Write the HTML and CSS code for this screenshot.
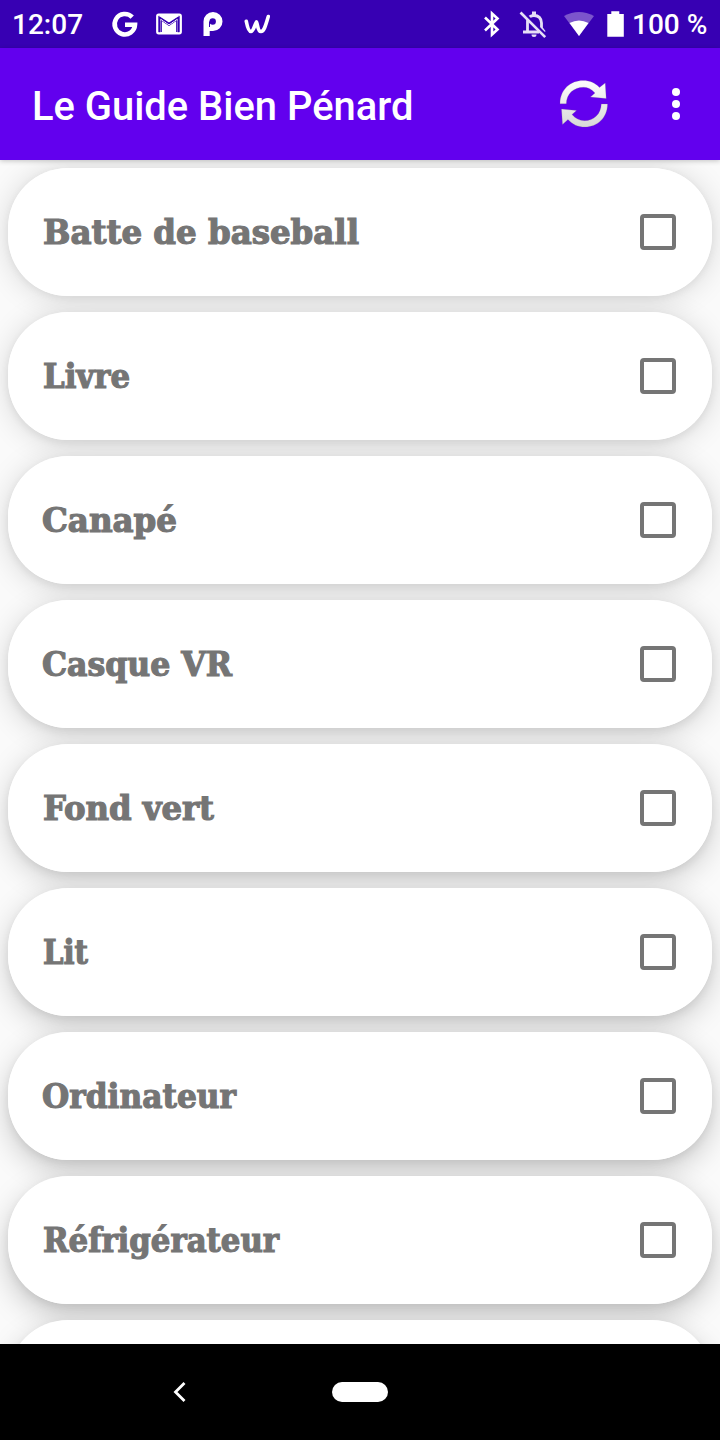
FILE: index.html
```html
<!DOCTYPE html>
<html lang="fr">
<head>
<meta charset="utf-8">
<title>Le Guide Bien Pénard</title>
<link rel="stylesheet" href="styles.css">
</head>
<body>
<div class="screen">
  <div class="status">
    <span class="clock">12:07</span>
    <svg class="notifications" width="170" height="48" viewBox="0 0 170 48" fill="none" stroke="#fff">
      <path d="M32.200 17.200A10.200 10.200 0 1 0 35 24.700H25" stroke-width="4.600"/>
      <rect x="57.200" y="14.700" width="23.600" height="18.600" rx="1.500" stroke-width="2.200"/>
      <path d="M61 33.500V20.500l8 5.500 8-5.500v13z" fill="#fff" stroke="none"/>
      <path d="M60.800 33V19.300l8.200 5.500 8.200-5.500V33" stroke="#fff" stroke-width="1"/>
      <path d="M59.500 16.800l9.500 6.400 9.500-6.400V14h-19z" fill="#fff" stroke="none"/>
      <path d="M59.700 17.200l9.300 6.200 9.300-6.200M61.200 20.500V32M76.800 20.500V32" stroke="#3700b3" stroke-width="1.300"/>
      <path d="M103.500 36V21.500a9.500 9.500 0 1 1 9.500 9.500h-3.300v5z" fill="#fff" stroke="none"/>
      <circle cx="112.700" cy="21.500" r="3.200" fill="#3700b3" stroke="none"/>
      <path d="M109.500 21.500v5.500" stroke="#3700b3" stroke-width="1"/>
      <path d="M146.300 21.300q2 10.200 4.700 10.200c2.500 0 3.500-6.500 5.500-9.500 1.500 3 1 9.500 4.500 9.500 3.300 0 5-7.500 7.300-15" stroke-width="3.600" stroke-linecap="round" stroke-linejoin="round"/>
    </svg>
    <svg class="indicators" width="150" height="48" viewBox="0 0 150 48" fill="none" stroke="#fff">
      <path d="M5 17.500l12.500 12-5.500 5V13.500l5.500 5L5 30.500" stroke-width="2.600"/>
      <path d="M43 32h16M47.500 32V21q1-5.500 6.500-5.500 7 0 7.500 7.500v5l3 4" stroke-width="2.800" stroke="#e6dff6"/>
      <path d="M51.500 34.500h5a2.500 2.500 0 0 1-5 0zM52 15v-3.500h4V15z" fill="#e6dff6" stroke="none"/>
      <path d="M42.500 11.500l25 25" stroke="#3700b3" stroke-width="2.500"/>
      <path d="M40.500 12.500l24.700 24.700" stroke="#e6dff6" stroke-width="2.600"/>
      <path d="M84 16q15-8 30 0L99 36z" fill="#7c55cc" stroke="none"/>
      <path d="M89.500 23q9.500-5 19 0L99 36z" fill="#fff" stroke="none"/>
      <path d="M127.300 14h4v-2.700h8V14h4.500v22.700h-16.500z" fill="#fff" stroke="none"/>
    </svg>
    <span class="battery">100 %</span>
  </div>

  <header class="appbar">
    <h1 class="title">Le Guide Bien Pénard</h1>
    <svg class="refresh" width="52" height="52" viewBox="0 0 52 52">
      <defs>
        <linearGradient id="silver" x1="0" y1="0" x2="0" y2="52" gradientUnits="userSpaceOnUse">
          <stop offset="0" stop-color="#fff"/><stop offset="1" stop-color="#d6d6d6"/>
        </linearGradient>
      </defs>
      <g fill="url(#silver)" stroke="#777" stroke-opacity=".35" stroke-width=".6">
        <path d="M2 25.800C2 11 13 2.500 25 2.500c7 0 12 2.300 16.500 7l5.700-4.500 1 15.500-15.700-1.500 4.500-4C33 11 29.500 9.300 25.500 9.300 15.500 9.300 8.500 16 8.300 25.800z"/>
        <path d="M49.500 26C49.500 40 39 49 27 49c-7 0-12.500-2.500-17-7.500L4.500 46.500 3.500 31l15 1.500-4.500 4c3.500 4 7.500 6.200 12.500 6.200C36 42.700 43 36 43.300 26z"/>
      </g>
    </svg>
    <svg class="more" width="10" height="36" viewBox="0 0 10 36" fill="#fff">
      <circle cx="5" cy="6" r="4"/><circle cx="5" cy="18" r="4"/><circle cx="5" cy="30" r="4"/>
    </svg>
  </header>

  <main class="list">
    <div class="item lift-1"><div class="card"><svg class="label" viewBox="0 0 400 60"><text x="0" y="42" textLength="316" lengthAdjust="spacingAndGlyphs">Batte de baseball</text></svg><span class="check"></span></div></div>
    <div class="item lift-2"><div class="card"><svg class="label" viewBox="0 0 400 60"><text x="0" y="42" textLength="87" lengthAdjust="spacingAndGlyphs">Livre</text></svg><span class="check"></span></div></div>
    <div class="item lift-3"><div class="card"><svg class="label" viewBox="0 0 400 60"><text x="-1" y="42" textLength="135" lengthAdjust="spacingAndGlyphs">Canapé</text></svg><span class="check"></span></div></div>
    <div class="item lift-4"><div class="card"><svg class="label" viewBox="0 0 400 60"><text x="-1" y="42" textLength="190" lengthAdjust="spacingAndGlyphs">Casque VR</text></svg><span class="check"></span></div></div>
    <div class="item lift-5"><div class="card"><svg class="label" viewBox="0 0 400 60"><text x="0" y="42" textLength="171" lengthAdjust="spacingAndGlyphs">Fond vert</text></svg><span class="check"></span></div></div>
    <div class="item lift-6"><div class="card"><svg class="label" viewBox="0 0 400 60"><text x="0" y="42" textLength="45" lengthAdjust="spacingAndGlyphs">Lit</text></svg><span class="check"></span></div></div>
    <div class="item lift-7"><div class="card"><svg class="label" viewBox="0 0 400 60"><text x="-1" y="42" textLength="194" lengthAdjust="spacingAndGlyphs">Ordinateur</text></svg><span class="check"></span></div></div>
    <div class="item lift-8"><div class="card"><svg class="label" viewBox="0 0 400 60"><text x="0" y="42" textLength="236" lengthAdjust="spacingAndGlyphs">Réfrigérateur</text></svg><span class="check"></span></div></div>
    <div class="item lift-8"><div class="card"></div></div>
  </main>

  <nav class="navbar">
    <svg class="back" width="16" height="22" viewBox="0 0 16 22" fill="none" stroke="#fff" stroke-width="2.800"><path d="M12.500 2L3.500 11l9 9"/></svg>
    <span class="home"></span>
  </nav>
</div>
</body>
</html>
```
FILE: styles.css
```css
* { box-sizing: border-box; }
body { margin: 0; font-family: Roboto, sans-serif; }
svg { display: block; flex: none; }

.screen {
  width: 720px;
  height: 1440px;
  display: flex;
  flex-direction: column;
  overflow: hidden;
  background: #fafafa;
}

.status {
  flex: none;
  height: 48px;
  display: flex;
  align-items: center;
  padding: 0 12px;
  background: #3700b3;
  color: #fff;
  font-size: 28px;
  font-weight: 500;
  line-height: 48px;
  white-space: nowrap;
}
.clock { width: 88px; padding-top: 2px; }
.indicators { margin-left: auto; margin-right: 2px; }
.battery { width: 76px; padding-top: 2px; }

.appbar {
  flex: none;
  position: relative;
  z-index: 3;
  height: 112px;
  display: flex;
  align-items: center;
  padding: 0 39px 0 32px;
  background: #6200ee;
  box-shadow: 0 1px 5px rgba(0, 0, 0, .22);
}
.title {
  flex: 1;
  margin: 0;
  padding-top: 5px;
  color: #fff;
  font-size: 39.9px;
  font-weight: 500;
  line-height: 49px;
}
.refresh { margin-right: 61px; }

.list {
  flex: 1;
  min-height: 0;
  display: flex;
  flex-direction: column;
  gap: 16px;
  padding: 8px 8px 0;
  overflow: hidden;
}
.item { flex: none; height: 128px; border-radius: 60px; }
.card {
  position: relative;
  z-index: 1;
  height: 128px;
  display: flex;
  align-items: center;
  justify-content: space-between;
  padding: 0 36px 0 35px;
  border-radius: 60px;
  background: #fff;
}
.lift-1 { box-shadow: 0 2px 30px rgba(0, 0, 0, .14), 0 2px 8px rgba(0, 0, 0, .06); }
.lift-2 { box-shadow: 0 3px 30px rgba(0, 0, 0, .14), 0 3px 8px rgba(0, 0, 0, .07); }
.lift-3 { box-shadow: 0 4px 30px rgba(0, 0, 0, .15), 0 3px 8px rgba(0, 0, 0, .07); }
.lift-4 { box-shadow: 0 6px 30px rgba(0, 0, 0, .16), 0 4px 8px rgba(0, 0, 0, .07); }
.lift-5 { box-shadow: 0 8px 30px rgba(0, 0, 0, .18), 0 4px 8px rgba(0, 0, 0, .07); }
.lift-6 { box-shadow: 0 9px 30px rgba(0, 0, 0, .19), 0 4px 8px rgba(0, 0, 0, .07); }
.lift-7 { box-shadow: 0 10px 30px rgba(0, 0, 0, .2), 0 4px 8px rgba(0, 0, 0, .07); }
.lift-8 { box-shadow: 0 11px 30px rgba(0, 0, 0, .21), 0 4px 8px rgba(0, 0, 0, .07); }

.label { width: 400px; height: 60px; overflow: visible; }
.label text {
  font-family: "DejaVu Serif Condensed", "DejaVu Serif", serif;
  font-size: 33px;
  font-weight: 700;
  fill: #757575;
  stroke: #757575;
  stroke-width: 1.1px;
}
.check {
  width: 36px;
  height: 36px;
  border: 4px solid #757575;
  border-radius: 4px;
}

.navbar {
  flex: none;
  position: relative;
  z-index: 3;
  height: 96px;
  display: flex;
  align-items: center;
  gap: 144px;
  padding-left: 172px;
  background: #000;
}
.home { width: 56px; height: 20px; border-radius: 10px; background: #fff; }
```
